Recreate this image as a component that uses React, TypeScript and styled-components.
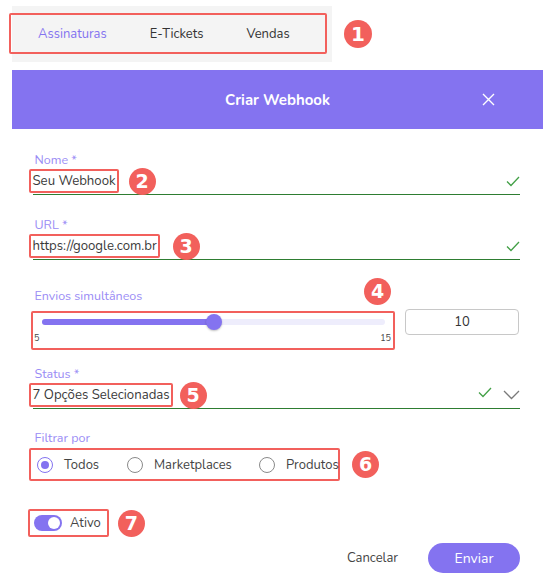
import React from "react";
import styled, { createGlobalStyle } from "styled-components";

const RED = "#f2605c";
const PURPLE = "#8473f0";
const LABEL = "#9a8cf5";
const TEXT = "#3a3a3a";
const GREEN = "#2e7d32";

const Global = createGlobalStyle`
  html, body { margin: 0; padding: 0; background: #fff; }
  body { font-family: "Nunito", "Lato", "Noto Sans", sans-serif; color: ${TEXT}; }
  * { box-sizing: border-box; }
`;

const Page = styled.div`
  width: 553px;
  height: 581px;
  padding: 6px 10px 0 12px;
  display: flex;
  flex-direction: column;
`;

const TabRow = styled.div`
  display: flex;
  align-items: center;
  gap: 12px;
`;

const TabBar = styled.div`
  position: relative;
  width: 320px;
  height: 56px;
  background: #f4f4f4;
  display: flex;
  align-items: center;
  padding-left: 26px;
  gap: 43px;
`;

const TabOutline = styled.div`
  position: absolute;
  left: -3px;
  top: 7px;
  width: 318px;
  height: 41px;
  border: 2.5px solid ${RED};
  border-radius: 2px;
  pointer-events: none;
`;

const Tab = styled.span<{ $active?: boolean }>`
  font-size: 13px;
  color: ${(p) => (p.$active ? PURPLE : "#333")};
`;

const Badge = styled.span<{ $size?: number }>`
  flex: none;
  width: ${(p) => p.$size ?? 27}px;
  height: ${(p) => p.$size ?? 27}px;
  border-radius: 50%;
  background: ${RED};
  color: #fff;
  display: inline-flex;
  align-items: center;
  justify-content: center;
  font-family: "DejaVu Sans", sans-serif;
  font-weight: bold;
  font-size: ${(p) => ((p.$size ?? 27) * 0.72).toFixed(0)}px;
  line-height: 1;
`;

const Header = styled.div`
  margin-top: 8px;
  width: 531px;
  height: 59px;
  background: ${PURPLE};
  display: grid;
  grid-template-columns: 1fr auto 1fr;
  align-items: center;
  color: #fff;
`;

const Title = styled.h1`
  grid-column: 2;
  margin: 0;
  font-size: 15px;
  font-weight: 700;
  font-family: "Nunito", "Lato", sans-serif;
`;

const Close = styled.button`
  grid-column: 3;
  justify-self: end;
  margin-right: 48px;
  background: none;
  border: none;
  padding: 0;
  display: flex;
  cursor: pointer;
`;

const Form = styled.div`
  padding: 23px 23px 0 21px;
  display: flex;
  flex-direction: column;
`;

const Field = styled.div<{ $gap?: number }>`
  display: flex;
  flex-direction: column;
  margin-bottom: ${(p) => p.$gap ?? 0}px;
  position: relative;
`;

const Label = styled.label`
  font-size: 12.5px;
  line-height: 16px;
  padding-left: 1.5px;
  color: ${LABEL};
`;

const InputRow = styled.div<{ $gap?: number }>`
  height: 27px;
  display: flex;
  align-items: center;
  gap: ${(p) => p.$gap ?? 10}px;
  border-bottom: 1.2px solid ${GREEN};
`;

const Mark = styled.span`
  margin-left: -4px;
  border: 2.5px solid ${RED};
  border-radius: 2px;
  padding: 1px 1px 1px 1.5px;
  font-size: 13.2px;
  line-height: 18px;
  color: ${TEXT};
  display: inline-flex;
  align-items: center;
`;

const Spacer = styled.span`
  flex: 1;
`;

const Icons = styled.span`
  display: flex;
  align-items: center;
  gap: 11px;
`;

const SliderRow = styled.div`
  display: flex;
  align-items: flex-start;
  gap: 10px;
  margin-top: 7px;
  margin-left: -2px;
`;

const SliderBox = styled.div`
  position: relative;
  width: 364px;
  height: 39px;
  border: 2.5px solid ${RED};
  border-radius: 2px;
  padding: 4px 8px 0 9px;
  display: flex;
  flex-direction: column;
`;

const Track = styled.div`
  position: relative;
  height: 6px;
  margin-top: 2px;
  border-radius: 3px;
  background: #eeedfc;
`;

const Fill = styled.div`
  position: absolute;
  left: 0;
  top: 0;
  bottom: 0;
  border-radius: 3px;
  background: ${PURPLE};
`;

const Thumb = styled.div`
  position: absolute;
  top: 50%;
  width: 16px;
  height: 16px;
  margin: -8px 0 0 -8px;
  border-radius: 50%;
  background: ${PURPLE};
  box-shadow: 0 1px 2px rgba(0,0,0,0.25);
`;

const Ticks = styled.div`
  display: flex;
  justify-content: space-between;
  margin: 8px -6px 0 -8px;
  font-size: 9px;
  line-height: 10px;
  color: #444;
`;

const FloatBadge = styled(Badge)`
  position: absolute;
  right: 2px;
  top: -35px;
`;

const NumberBox = styled.div`
  width: 114px;
  height: 26px;
  margin-top: -2px;
  border: 1px solid #c8c8c8;
  border-radius: 4px;
  display: flex;
  align-items: center;
  justify-content: center;
  font-size: 13px;
  color: #333;
`;

const RadioRow = styled.div`
  display: flex;
  align-items: center;
  gap: 12px;
  margin-top: 2px;
`;

const RadioBox = styled.div`
  margin-left: -4px;
  width: 311px;
  height: 33px;
  border: 2.5px solid ${RED};
  border-radius: 2px;
  padding-left: 6px;
  display: flex;
  align-items: center;
`;

const RadioOption = styled.span<{ $w?: number }>`
  flex: none;
  width: ${(p) => (p.$w ? `${p.$w}px` : "auto")};
  display: flex;
  align-items: center;
  gap: 11px;
  font-size: 13px;
  color: #444;
  white-space: nowrap;
`;

const RadioCircle = styled.span<{ $on?: boolean }>`
  width: 16px;
  height: 16px;
  border-radius: 50%;
  border: 1.6px solid ${(p) => (p.$on ? PURPLE : "#8a8a8a")};
  display: flex;
  align-items: center;
  justify-content: center;
  &::after {
    content: "";
    width: 8px;
    height: 8px;
    border-radius: 50%;
    background: ${(p) => (p.$on ? PURPLE : "transparent")};
  }
`;

const SwitchRow = styled.div`
  display: flex;
  align-items: center;
  gap: 9px;
  margin-top: 28px;
  margin-left: -5px;
`;

const SwitchBox = styled.div`
  height: 28px;
  border: 2.5px solid ${RED};
  border-radius: 2px;
  padding: 0 6px 0 4px;
  display: flex;
  align-items: center;
  gap: 8px;
  font-size: 13px;
  color: #444;
`;

const Toggle = styled.span`
  width: 28px;
  height: 16px;
  border-radius: 8px;
  background: ${PURPLE};
  display: flex;
  align-items: center;
  justify-content: flex-end;
  padding-right: 2px;
  &::after {
    content: "";
    width: 12px;
    height: 12px;
    border-radius: 50%;
    background: #fff;
  }
`;

const Footer = styled.div`
  display: flex;
  justify-content: flex-end;
  align-items: center;
  gap: 30px;
  margin-top: 6px;
`;

const Cancel = styled.button`
  background: none;
  border: none;
  font-family: inherit;
  font-size: 13px;
  color: #444;
  padding: 0;
`;

const Submit = styled.button`
  width: 92px;
  height: 30px;
  border: none;
  border-radius: 15px;
  background: ${PURPLE};
  color: #fff;
  font-family: inherit;
  font-size: 14px;
`;

const Check = ({ lift = 0 }: { lift?: number }) => (
  <svg width="14" height="11" viewBox="0 0 14 11" style={{ marginTop: -lift }}>
    <polyline points="1,5.5 5,9.5 13,1" fill="none" stroke="#43a047" strokeWidth="1.3" />
  </svg>
);

const Chevron = () => (
  <svg width="17" height="10" viewBox="0 0 17 10">
    <polyline points="1,1 8.5,8.5 16,1" fill="none" stroke="#7a7a7a" strokeWidth="1.3" />
  </svg>
);

export default function App() {
  const min = 5, max = 15, value = 10;
  const pct = ((value - min) / (max - min)) * 100;
  return (
    <>
      <Global />
      <Page>
        <TabRow>
          <TabBar>
            <TabOutline />
            <Tab $active>Assinaturas</Tab>
            <Tab>E-Tickets</Tab>
            <Tab>Vendas</Tab>
          </TabBar>
          <Badge $size={28}>1</Badge>
        </TabRow>

        <Header>
          <Title>Criar Webhook</Title>
          <Close aria-label="Fechar">
            <svg width="13" height="13" viewBox="0 0 13 13">
              <path d="M1 1 L12 12 M12 1 L1 12" stroke="#fff" strokeWidth="1.4" />
            </svg>
          </Close>
        </Header>

        <Form>
          <Field $gap={22}>
            <Label>Nome *</Label>
            <InputRow>
              <Mark>Seu Webhook</Mark>
              <Badge>2</Badge>
              <Spacer />
              <Check />
            </InputRow>
          </Field>

          <Field $gap={28}>
            <Label>URL *</Label>
            <InputRow $gap={13}>
              <Mark>https://google.com.br</Mark>
              <Badge>3</Badge>
              <Spacer />
              <Check />
            </InputRow>
          </Field>

          <Field $gap={16}>
            <Label>Envios simultâneos</Label>
            <SliderRow>
              <SliderBox>
                <FloatBadge>4</FloatBadge>
                <Track>
                  <Fill style={{ width: `${pct}%` }} />
                  <Thumb style={{ left: `${pct}%` }} />
                </Track>
                <Ticks>
                  <span>{min}</span>
                  <span>{max}</span>
                </Ticks>
              </SliderBox>
              <NumberBox>{value}</NumberBox>
            </SliderRow>
          </Field>

          <Field $gap={21}>
            <Label>Status *</Label>
            <InputRow $gap={7}>
              <Mark>7 Opções Selecionadas</Mark>
              <Badge>5</Badge>
              <Spacer />
              <Icons>
                <Check lift={5} />
                <Chevron />
              </Icons>
            </InputRow>
          </Field>

          <Field>
            <Label>Filtrar por</Label>
            <RadioRow>
              <RadioBox>
                <RadioOption $w={90}>
                  <RadioCircle $on />
                  Todos
                </RadioOption>
                <RadioOption $w={132}>
                  <RadioCircle />
                  Marketplaces
                </RadioOption>
                <RadioOption>
                  <RadioCircle />
                  Produtos
                </RadioOption>
              </RadioBox>
              <Badge>6</Badge>
            </RadioRow>
          </Field>

          <SwitchRow>
            <SwitchBox>
              <Toggle />
              Ativo
            </SwitchBox>
            <Badge>7</Badge>
          </SwitchRow>

          <Footer>
            <Cancel>Cancelar</Cancel>
            <Submit>Enviar</Submit>
          </Footer>
        </Form>
      </Page>
    </>
  );
}
